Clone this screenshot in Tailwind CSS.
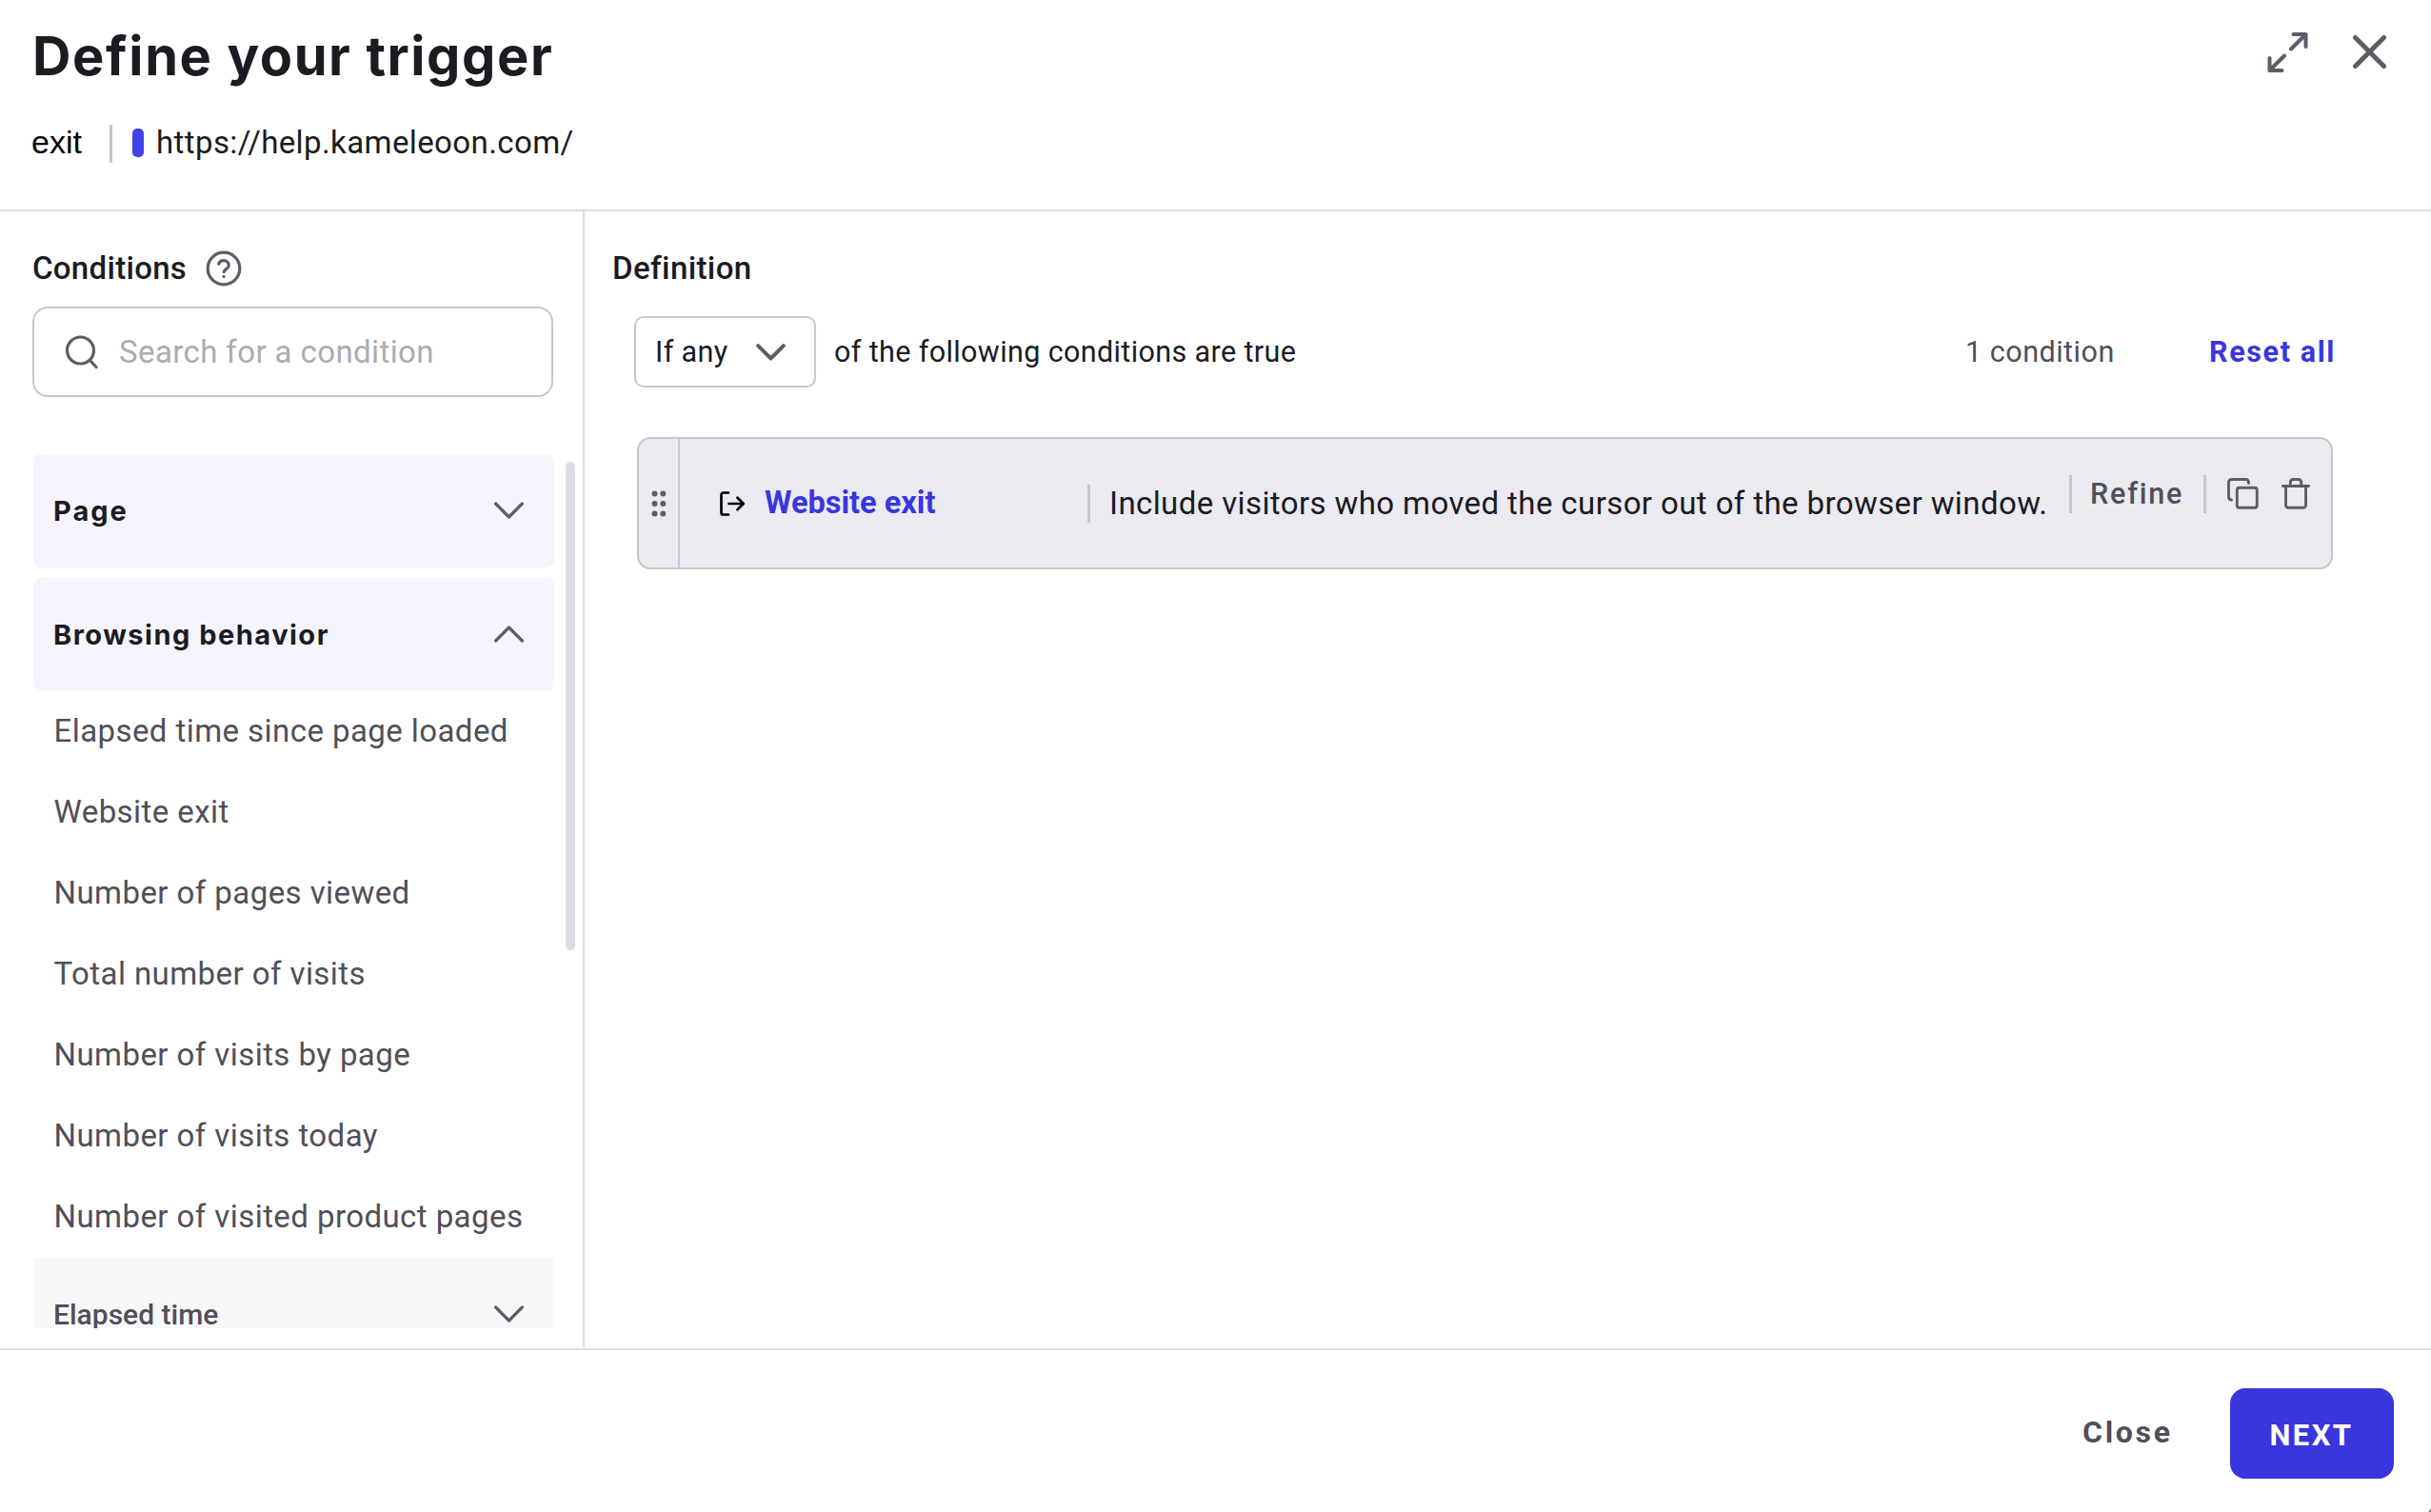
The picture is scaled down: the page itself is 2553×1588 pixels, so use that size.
<!DOCTYPE html>
<html lang="en">
<head>
    <meta charset="UTF-8">
    <meta name="viewport" content="width=device-width, initial-scale=1.0">
    <title>Define your trigger</title>
    <script src="https://cdn.jsdelivr.net/npm/@tailwindcss/browser@4"></script>
</head>
<body class="bg-white h-screen flex flex-col overflow-hidden font-[Roboto,sans-serif] text-[33px] tracking-[0.4px] text-[#1b1b22]">

    <!-- Header -->
    <header class="h-[222px] shrink-0 border-b-2 border-[#dddce6] pt-6 pl-[33px] pr-[47px] flex justify-between">
        <div>
            <h1 class="font-[Inter,sans-serif] font-bold text-[56px] leading-[70px] tracking-[1.6px] pl-[1px]">Define your trigger</h1>
            <div class="mt-[37px] h-10 flex items-center whitespace-nowrap">
                <span class="font-['Liberation_Sans',sans-serif] text-[34px] tracking-normal text-black w-[82px] mb-[4px]">exit</span>
                <span class="w-[3px] h-10 bg-[#c7c5d2]"></span>
                <span class="ml-[21px] mb-[2px] w-3 h-[30px] rounded-[5px] bg-[#4340e5]"></span>
                <span class="ml-[13px] mb-[2px]">https://help.kameleoon.com/</span>
            </div>
        </div>
        <div class="flex gap-[46px] pt-[9px] text-[#5e5d67]">
            <button class="h-11">
                <svg class="w-[44px] h-[44px]" viewBox="0 0 44 44" fill="none" stroke="currentColor" stroke-width="4" stroke-linecap="round" stroke-linejoin="round">
                    <path d="M28.5 3h13v13M41.5 3L26 18.5M3.500 28v13h13M3.500 41L19 25.500"></path>
                </svg>
            </button>
            <button class="h-11">
                <svg class="w-[36px] h-[44px]" viewBox="0 0 36 44" fill="none" stroke="currentColor" stroke-width="5" stroke-linecap="round">
                    <path d="M3.500 6.500l30 30M33.500 6.500l-30 30"></path>
                </svg>
            </button>
        </div>
    </header>

    <main class="flex h-[1194px] shrink-0">

        <!-- Conditions -->
        <aside class="w-[614px] h-[1193px] shrink-0 border-r-2 border-[#dddce6] pl-[34px] pt-10">
            <div class="h-10 flex items-center">
                <h2 class="font-medium tracking-[0.3px] w-[182px]">Conditions</h2>
                <svg class="w-[38px] h-[38px] text-[#5e5d67]" viewBox="0 0 38 38" fill="none" stroke="currentColor" stroke-width="3.2" stroke-linecap="round" stroke-linejoin="round">
                    <circle cx="19" cy="19" r="16.8"></circle>
                    <path d="M13.7 14.2c.7-2.4 2.9-3.7 5.3-3.5 3.1.2 5.3 2.2 5.3 5 0 3.5-4.9 4.1-5.3 7M19 27.300v.2"></path>
                </svg>
            </div>
            <div class="mt-5 w-[547px] h-[95px] rounded-2xl border-2 border-[#c7c5d2] pl-[31px] flex items-center">
                <svg class="w-[38px] h-[38px] text-[#5e5d67]" viewBox="0 0 38 38" fill="none" stroke="currentColor" stroke-width="3.2" stroke-linecap="round">
                    <circle cx="17.5" cy="17" r="14"></circle>
                    <path d="M28 28l6 6.5"></path>
                </svg>
                <span class="ml-[20px] text-[#acabb5]">Search for a condition</span>
            </div>

            <div class="mt-[60px] ml-[1px] h-[918px] flex items-start overflow-hidden">
                <div class="w-[547px] shrink-0">
                    <div class="h-[119px] rounded-lg bg-[#f5f5ff] pl-[21px] pr-8 flex items-center justify-between">
                        <span class="font-[Inter,sans-serif] font-bold text-[29px] tracking-[2px]">Page</span>
                        <svg class="w-[31px] h-5 mb-[1px] text-[#5e5d67]" viewBox="0 0 31 20" fill="none" stroke="currentColor" stroke-width="3.2" stroke-linecap="round" stroke-linejoin="round"><path d="M1.600 3l13.900 14 13.900-14"></path></svg>
                    </div>
                    <div class="mt-[11px] h-[119px] rounded-lg bg-[#f5f5ff] pl-[21px] pr-8 flex items-center justify-between">
                        <span class="font-[Inter,sans-serif] font-bold text-[29px] tracking-[1.5px]">Browsing behavior</span>
                        <svg class="w-[31px] h-5 mb-[1px] text-[#5e5d67]" viewBox="0 0 31 20" fill="none" stroke="currentColor" stroke-width="3.2" stroke-linecap="round" stroke-linejoin="round"><path d="M1.600 17l13.900-14 13.900 14"></path></svg>
                    </div>
                    <ul class="-mt-[1px] mb-[1px] pl-[21.5px] text-[#504f59] leading-[85px] tracking-[0.43px] whitespace-nowrap">
                        <li>Elapsed time since page loaded</li>
                        <li>Website exit</li>
                        <li>Number of pages viewed</li>
                        <li>Total number of visits</li>
                        <li>Number of visits by page</li>
                        <li>Number of visits today</li>
                        <li>Number of visited product pages</li>
                    </ul>
                    <div class="h-[119px] bg-[#f8f8fb] pl-[21px] pr-8 flex items-center justify-between">
                        <span class="font-medium text-[30px] tracking-normal text-[#504f59] mb-[1px]">Elapsed time</span>
                        <svg class="w-[31px] h-5 mb-[1px] text-[#5e5d67]" viewBox="0 0 31 20" fill="none" stroke="currentColor" stroke-width="3.2" stroke-linecap="round" stroke-linejoin="round"><path d="M1.600 3l13.900 14 13.900-14"></path></svg>
                    </div>
                </div>
                <!-- Scrollbar -->
                <div class="ml-3 mt-2 w-[10px] h-[513px] rounded-full bg-[#dddce6]"></div>
            </div>
        </aside>

        <!-- Definition -->
        <section class="flex-1 pt-10 pl-7">
            <h2 class="h-10 leading-10 pl-[1px] font-medium tracking-[0.4px]">Definition</h2>

            <div class="mt-[30px] ml-6 w-[1787px] h-[75px] flex items-center text-[30.5px] tracking-[0.38px] whitespace-nowrap">
                <button class="w-[191px] h-[75px] rounded-[10px] border-2 border-[#c7c5d2] bg-white pl-5 pr-[30px] flex items-center justify-between">
                    <span>If any</span>
                    <svg class="w-[31px] h-5 text-[#5e5d67]" viewBox="0 0 31 20" fill="none" stroke="currentColor" stroke-width="4" stroke-linecap="round" stroke-linejoin="round"><path d="M2.200 3.200l13.300 13.300L28.800 3.200"></path></svg>
                </button>
                <span class="ml-[19px]">of the following conditions are true</span>
                <span class="ml-auto w-[256px] text-[#504f59] tracking-[0.5px]">1 condition</span>
                <button class="font-bold text-[#3936dd] tracking-[1.6px]">Reset all</button>
            </div>

            <div class="mt-[52px] ml-[27px] w-[1781px] h-[139px] rounded-[14px] border-2 border-[#c7c5d2] bg-[#ebeaf1] flex items-center whitespace-nowrap">
                <div class="w-[43px] h-full border-r-2 border-[#c7c5d2] flex items-center justify-center">
                    <svg class="w-4 h-[28px] text-[#5e5d67]" viewBox="0 0 16 28" fill="currentColor">
                        <circle cx="3.5" cy="3.5" r="3"></circle>
                        <circle cx="12.3" cy="3.5" r="3"></circle>
                        <circle cx="3.5" cy="14" r="3"></circle>
                        <circle cx="12.3" cy="14" r="3"></circle>
                        <circle cx="3.5" cy="24.5" r="3"></circle>
                        <circle cx="12.3" cy="24.5" r="3"></circle>
                    </svg>
                </div>
                <svg class="ml-[42px] w-[26px] h-[26px] text-black" viewBox="0 0 26 26" fill="none" stroke="currentColor" stroke-width="2.7" stroke-linecap="round" stroke-linejoin="round">
                    <path d="M9 1.500H3.500a2 2 0 0 0-2 2v19a2 2 0 0 0 2 2H9M9.500 13H24.500M18.500 6.800L24.700 13l-6.200 6.200"></path>
                </svg>
                <span class="ml-[21px] w-[339px] font-bold text-[32.5px] text-[#3936dd] tracking-normal">Website exit</span>
                <span class="w-[3px] h-10 bg-[#c7c5d2]"></span>
                <span class="ml-[20px] w-[1008px]">Include visitors who moved the cursor out of the browser window.</span>
                <div class="mb-5 flex items-center text-[#5e5d67]">
                    <span class="w-[3px] h-10 bg-[#c7c5d2]"></span>
                    <button class="ml-[19px] w-[119px] text-left font-medium text-[30.5px] tracking-[1.8px] text-[#504f59]">Refine</button>
                    <span class="w-[3px] h-10 bg-[#c7c5d2]"></span>
                    <svg class="ml-[22px] w-[33px] h-[33px]" viewBox="0 0 33 33" fill="none" stroke="currentColor" stroke-width="2.9" stroke-linecap="round" stroke-linejoin="round">
                        <rect x="10.3" y="10.3" width="21" height="21" rx="2.5"></rect>
                        <path d="M22.500 5.500V4.500a3 3 0 0 0-3-3H4.500a3 3 0 0 0-3 3V20a3 3 0 0 0 3 3"></path>
                    </svg>
                    <svg class="ml-6 w-[30px] h-[33px]" viewBox="0 0 30 33" fill="none" stroke="currentColor" stroke-width="2.9" stroke-linecap="round" stroke-linejoin="round">
                        <path d="M1.500 8.500h27M4.500 8.500v20a2.800 2.800 0 0 0 2.800 2.800h15.400a2.800 2.800 0 0 0 2.800-2.800v-20M9.300 8V4.500a3 3 0 0 1 3-3h5.400a3 3 0 0 1 3 3V8"></path>
                    </svg>
                </div>
            </div>
        </section>
    </main>

    <!-- Footer -->
    <footer class="relative flex-1 border-t-2 border-[#dddce6] pt-10 pr-[39px] flex items-start justify-end">
        <button class="h-[95px] pb-[3px] w-[155px] text-left font-bold text-[32px] tracking-[2.7px] text-[#504f59]">Close</button>
        <button class="w-[172px] h-[95px] rounded-2xl bg-[#3936dd] text-white font-bold text-[31px] tracking-[2.4px] pt-[5px] pr-[1px]">NEXT</button>
        <svg class="absolute right-0 bottom-0 w-[3px] h-1 text-[#8a8a8a]" viewBox="0 0 3 4" fill="currentColor"><path d="M3 0v4H0z"></path></svg>
    </footer>

</body>
</html>
